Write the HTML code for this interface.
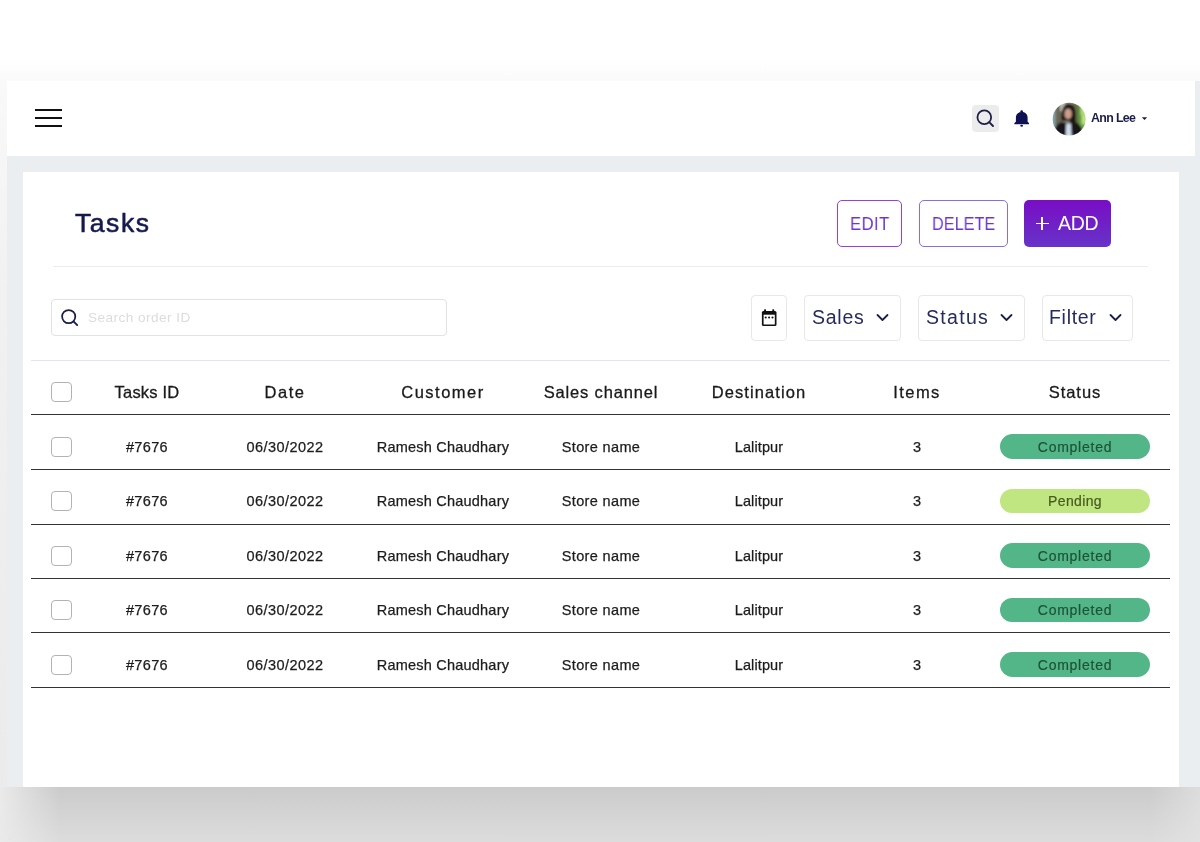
<!DOCTYPE html>
<html><head><meta charset="utf-8"><title>Tasks</title>
<style>
html,body{margin:0;padding:0;}
body{width:1200px;height:842px;overflow:hidden;position:relative;background:#fff;font-family:"Liberation Sans",sans-serif;}
.a{position:absolute;}
.t{position:absolute;white-space:nowrap;will-change:transform;}
</style></head><body>
<div class="a" style="left:0;top:58px;width:1200px;height:23px;background:linear-gradient(#ffffff,#fafafa);"></div>
<div class="a" style="left:0;top:787px;width:1200px;height:55px;background:linear-gradient(#cbcbcb,#dcdcdc);"></div>
<div class="a" style="left:0;top:787px;width:60px;height:55px;background:linear-gradient(90deg,rgba(234,234,234,1),rgba(234,234,234,0));"></div>
<div class="a" style="left:1150px;top:787px;width:50px;height:55px;background:linear-gradient(90deg,rgba(228,228,228,0),rgba(228,228,228,0.7));"></div>
<div class="a" style="left:0;top:81px;width:7px;height:706px;background:linear-gradient(#f9f9f9,#f1f1f1 30%,#ebebeb);"></div>
<div class="a" style="left:7px;top:81px;width:1193px;height:706px;background:#ebeef0;"></div>
<div class="a" style="left:7px;top:81px;width:1188px;height:75px;background:#fff;"></div>
<div class="a" style="left:35px;top:109px;width:27px;height:2px;background:#111;"></div>
<div class="a" style="left:35px;top:117px;width:27px;height:2px;background:#111;"></div>
<div class="a" style="left:35px;top:125px;width:27px;height:2px;background:#111;"></div>
<div class="a" style="left:972px;top:105px;width:27px;height:27px;background:#ececec;border-radius:4px;"></div>
<svg class="a" style="left:972px;top:105px" width="27" height="27" viewBox="0 0 27 27"><circle cx="12.3" cy="12.3" r="6.85" fill="none" stroke="#1c2048" stroke-width="1.8"/><line x1="17.2" y1="17.2" x2="21" y2="21" stroke="#1c2048" stroke-width="1.9" stroke-linecap="round"/></svg>
<svg class="a" style="left:1008px;top:104px" width="28" height="28" viewBox="0 0 28 28"><circle cx="13.65" cy="7.5" r="1.3" fill="#0e1252"/><path d="M7.9 17.7V13.6C7.9 9.9 10.3 7.9 13.65 7.9S19.6 9.9 19.6 13.6V17.7L21 18.9V20.3H6.4V18.9Z" fill="#0e1252"/><ellipse cx="13.65" cy="21.7" rx="1.4" ry="1.05" fill="#0e1252"/></svg>
<svg class="a" style="left:1049px;top:100px" width="40" height="40" viewBox="0 0 40 40"><defs><clipPath id="cc"><circle cx="20.1" cy="19.2" r="16.4"/></clipPath><filter id="bl" x="-20%" y="-20%" width="140%" height="140%"><feGaussianBlur stdDeviation="0.8"/></filter></defs>
<g clip-path="url(#cc)"><g filter="url(#bl)">
<rect width="40" height="40" fill="#8d8a76"/>
<rect x="0" y="0" width="7" height="40" fill="#88a1ab"/>
<rect x="6.5" y="0" width="6" height="40" fill="#6a6654"/>
<rect x="11" y="0" width="5" height="11" fill="#b9b8ae"/>
<rect x="24" y="3" width="5" height="22" fill="#6d6a4c"/>
<rect x="27" y="0" width="13" height="40" fill="#74a84a"/>
<rect x="27" y="4" width="3.5" height="20" fill="#5e7a3e"/>
<rect x="31.5" y="7" width="5" height="8" fill="#a9dc74"/>
<rect x="33" y="15" width="4" height="9" fill="#b8e67e"/>
<path d="M12.3 21C12.2 8.5 14.8 3.8 19.7 3.8S26.8 8 26.8 15L27.3 31L20.8 31L20.8 21Z" fill="#1b1716"/>
<ellipse cx="19.1" cy="13.8" rx="3.7" ry="5.3" fill="#cd9d8a"/>
<path d="M3 40C4.5 28.5 8 23.5 13 21.8L19.5 23.5L25 21.5C31 23 34 28 36 40Z" fill="#15161c"/>
<path d="M21 21L26.8 21L27.3 31L22 31Z" fill="#1a1717"/>
<path d="M17.2 23.6L22 23.6L23 40H16.6Z" fill="#cfdcec"/>
</g></g></svg>
<div class="t" style="left:1090.50px;top:110.70px;font-size:12.4px;line-height:15px;color:#1b1d4b;font-weight:bold;letter-spacing:-0.65px;">Ann Lee</div>
<svg class="a" style="left:1141px;top:116px" width="7" height="5" viewBox="0 0 7 5"><path d="M0.8 1.2h5.4L3.5 4z" fill="#1b1d4b"/></svg>
<div class="a" style="left:23px;top:172px;width:1155.5px;height:615px;background:#fff;"></div>
<div class="t" style="left:75.00px;top:207.37px;font-size:26.5px;line-height:32px;color:#151a4d;font-weight:normal;letter-spacing:1.55px;-webkit-text-stroke:0.55px #151a4d;">Tasks</div>
<div class="a" style="left:837px;top:200px;width:63px;height:45px;border:1px solid #9540d6;border-radius:5px;"></div>
<div class="t" style="left:850.30px;top:211.82px;font-size:19px;line-height:23px;color:#6b38cf;font-weight:normal;letter-spacing:0.5px;transform:scaleX(0.875);transform-origin:0 0;">EDIT</div>
<div class="a" style="left:919px;top:200px;width:87px;height:45px;border:1px solid #8a6cdc;border-radius:5px;"></div>
<div class="t" style="left:931.50px;top:211.82px;font-size:19px;line-height:23px;color:#6b38cf;font-weight:normal;letter-spacing:0px;transform:scaleX(0.855);transform-origin:0 0;">DELETE</div>
<div class="a" style="left:1024px;top:200px;width:87px;height:47px;border-radius:5px;background:linear-gradient(#790dc5,#6733c8);"></div>
<div class="a" style="left:1035.6px;top:222.5px;width:13.5px;height:1.8px;background:#fff;"></div>
<div class="a" style="left:1041.45px;top:216.6px;width:1.8px;height:13.6px;background:#fff;"></div>
<div class="t" style="left:1057.70px;top:211.84px;font-size:19.5px;line-height:23px;color:#ffffff;font-weight:normal;letter-spacing:-0.3px;">ADD</div>
<div class="a" style="left:53px;top:266px;width:1095px;height:1px;background:#ecebf3;"></div>
<div class="a" style="left:51px;top:299px;width:394px;height:35px;border:1px solid #e2e2e2;border-radius:4px;"></div>
<svg class="a" style="left:59.6px;top:307.6px" width="20" height="20" viewBox="0 0 20 20"><circle cx="8.7" cy="8.6" r="6.6" fill="none" stroke="#1a1f48" stroke-width="1.75"/><line x1="13.5" y1="13.4" x2="17.2" y2="17.1" stroke="#1a1f48" stroke-width="1.9" stroke-linecap="round"/></svg>
<div class="t" style="left:88.00px;top:309.99px;font-size:13.6px;line-height:16px;color:#dcdcdc;font-weight:normal;letter-spacing:0.45px;">Search order ID</div>
<div class="a" style="left:751px;top:295px;width:34px;height:44px;border:1px solid #e8e8e8;border-radius:4px;"></div>
<div class="a" style="left:804px;top:295px;width:95px;height:44px;border:1px solid #e8e8e8;border-radius:4px;"></div>
<div class="a" style="left:918px;top:295px;width:105px;height:44px;border:1px solid #e8e8e8;border-radius:4px;"></div>
<div class="a" style="left:1042px;top:295px;width:89px;height:44px;border:1px solid #e8e8e8;border-radius:4px;"></div>
<svg class="a" style="left:761px;top:309px" width="17" height="18" viewBox="0 0 17 18"><rect x="3.1" y="0.3" width="1.9" height="3" rx="0.6" fill="#111"/><rect x="11.3" y="0.3" width="1.9" height="3" rx="0.6" fill="#111"/><rect x="0.9" y="2.1" width="14.6" height="15" rx="1.5" fill="#111"/><rect x="2.6" y="5.7" width="11.2" height="9.8" fill="#fff"/><ellipse cx="4.7" cy="8.5" rx="1.05" ry="1" fill="#111"/><ellipse cx="8.1" cy="8.5" rx="1.05" ry="1" fill="#111"/><ellipse cx="11.5" cy="8.5" rx="1.05" ry="1" fill="#111"/></svg>
<div class="t" style="left:812.30px;top:305.74px;font-size:19.5px;line-height:23px;color:#262b5e;font-weight:normal;letter-spacing:0.75px;">Sales</div>
<svg class="a" style="left:876.1px;top:313px" width="13" height="9" viewBox="0 0 13 9"><path d="M1.5 2L6.5 7 11.5 2" fill="none" stroke="#1c1f4a" stroke-width="1.8" stroke-linecap="round" stroke-linejoin="round"/></svg>
<div class="t" style="left:925.90px;top:305.74px;font-size:19.5px;line-height:23px;color:#262b5e;font-weight:normal;letter-spacing:1.3px;">Status</div>
<svg class="a" style="left:1000.4px;top:313px" width="13" height="9" viewBox="0 0 13 9"><path d="M1.5 2L6.5 7 11.5 2" fill="none" stroke="#1c1f4a" stroke-width="1.8" stroke-linecap="round" stroke-linejoin="round"/></svg>
<div class="t" style="left:1049.40px;top:305.74px;font-size:19.5px;line-height:23px;color:#262b5e;font-weight:normal;letter-spacing:0.7px;">Filter</div>
<svg class="a" style="left:1108.6999999999998px;top:313px" width="13" height="9" viewBox="0 0 13 9"><path d="M1.5 2L6.5 7 11.5 2" fill="none" stroke="#1c1f4a" stroke-width="1.8" stroke-linecap="round" stroke-linejoin="round"/></svg>
<div class="a" style="left:31px;top:360px;width:1139px;height:1px;background:#e4e2f7;"></div>
<div class="a" style="left:51px;top:382px;width:19px;height:18px;border:1px solid #b3b3b3;border-radius:4px;"></div>
<div class="t" style="left:46.50px;top:382.48px;width:200px;text-align:center;font-size:16.5px;line-height:20px;color:#1a1a1a;font-weight:normal;letter-spacing:0.2px;-webkit-text-stroke:0.3px #1a1a1a;">Tasks ID</div>
<div class="t" style="left:185.47px;top:382.48px;width:200px;text-align:center;font-size:16.5px;line-height:20px;color:#1a1a1a;font-weight:normal;letter-spacing:1.55px;-webkit-text-stroke:0.3px #1a1a1a;">Date</div>
<div class="t" style="left:343.25px;top:382.48px;width:200px;text-align:center;font-size:16.5px;line-height:20px;color:#1a1a1a;font-weight:normal;letter-spacing:1.5px;-webkit-text-stroke:0.3px #1a1a1a;">Customer</div>
<div class="t" style="left:501.13px;top:382.48px;width:200px;text-align:center;font-size:16.5px;line-height:20px;color:#1a1a1a;font-weight:normal;letter-spacing:0.8500000000000001px;-webkit-text-stroke:0.3px #1a1a1a;">Sales channel</div>
<div class="t" style="left:659.35px;top:382.48px;width:200px;text-align:center;font-size:16.5px;line-height:20px;color:#1a1a1a;font-weight:normal;letter-spacing:1.1px;-webkit-text-stroke:0.3px #1a1a1a;">Destination</div>
<div class="t" style="left:817.33px;top:382.48px;width:200px;text-align:center;font-size:16.5px;line-height:20px;color:#1a1a1a;font-weight:normal;letter-spacing:1.45px;-webkit-text-stroke:0.3px #1a1a1a;">Items</div>
<div class="t" style="left:975.38px;top:382.48px;width:200px;text-align:center;font-size:16.5px;line-height:20px;color:#1a1a1a;font-weight:normal;letter-spacing:0.95px;-webkit-text-stroke:0.3px #1a1a1a;">Status</div>
<div class="a" style="left:31px;top:414px;width:1139px;height:1px;background:#333;box-shadow:0 0 0.6px rgba(0,0,0,0.5);"></div>
<div class="a" style="left:51px;top:437px;width:19px;height:18px;border:1px solid #b3b3b3;border-radius:4px;"></div>
<div class="t" style="left:36.58px;top:438.58px;width:220px;text-align:center;font-size:14.5px;line-height:17px;color:#1c1c1c;font-weight:normal;letter-spacing:0.35px;-webkit-text-stroke:0.25px #1c1c1c;">#7676</div>
<div class="t" style="left:174.92px;top:438.58px;width:220px;text-align:center;font-size:14.5px;line-height:17px;color:#1c1c1c;font-weight:normal;letter-spacing:0.45px;-webkit-text-stroke:0.25px #1c1c1c;">06/30/2022</div>
<div class="t" style="left:332.61px;top:438.58px;width:220px;text-align:center;font-size:14.5px;line-height:17px;color:#1c1c1c;font-weight:normal;letter-spacing:0.21000000000000002px;-webkit-text-stroke:0.25px #1c1c1c;">Ramesh Chaudhary</div>
<div class="t" style="left:490.88px;top:438.58px;width:220px;text-align:center;font-size:14.5px;line-height:17px;color:#1c1c1c;font-weight:normal;letter-spacing:0.35px;-webkit-text-stroke:0.25px #1c1c1c;">Store name</div>
<div class="t" style="left:648.86px;top:438.58px;width:220px;text-align:center;font-size:14.5px;line-height:17px;color:#1c1c1c;font-weight:normal;letter-spacing:0.12000000000000001px;-webkit-text-stroke:0.25px #1c1c1c;">Lalitpur</div>
<div class="t" style="left:806.62px;top:438.58px;width:220px;text-align:center;font-size:14.5px;line-height:17px;color:#1c1c1c;font-weight:normal;letter-spacing:0.05px;-webkit-text-stroke:0.25px #1c1c1c;">3</div>
<div class="a" style="left:1000px;top:434.20px;width:150px;height:24.5px;border-radius:12.5px;background:#52b689;"></div>
<div class="t" style="left:1000.38px;top:438.95px;width:150px;text-align:center;font-size:14px;line-height:17px;color:#1f5236;font-weight:normal;letter-spacing:0.75px;-webkit-text-stroke:0.2px #1f5236;">Completed</div>
<div class="a" style="left:31px;top:469px;width:1139px;height:1px;background:#333;box-shadow:0 0 0.6px rgba(0,0,0,0.5);"></div>
<div class="a" style="left:51px;top:491px;width:19px;height:18px;border:1px solid #b3b3b3;border-radius:4px;"></div>
<div class="t" style="left:36.58px;top:493.08px;width:220px;text-align:center;font-size:14.5px;line-height:17px;color:#1c1c1c;font-weight:normal;letter-spacing:0.35px;-webkit-text-stroke:0.25px #1c1c1c;">#7676</div>
<div class="t" style="left:174.92px;top:493.08px;width:220px;text-align:center;font-size:14.5px;line-height:17px;color:#1c1c1c;font-weight:normal;letter-spacing:0.45px;-webkit-text-stroke:0.25px #1c1c1c;">06/30/2022</div>
<div class="t" style="left:332.61px;top:493.08px;width:220px;text-align:center;font-size:14.5px;line-height:17px;color:#1c1c1c;font-weight:normal;letter-spacing:0.21000000000000002px;-webkit-text-stroke:0.25px #1c1c1c;">Ramesh Chaudhary</div>
<div class="t" style="left:490.88px;top:493.08px;width:220px;text-align:center;font-size:14.5px;line-height:17px;color:#1c1c1c;font-weight:normal;letter-spacing:0.35px;-webkit-text-stroke:0.25px #1c1c1c;">Store name</div>
<div class="t" style="left:648.86px;top:493.08px;width:220px;text-align:center;font-size:14.5px;line-height:17px;color:#1c1c1c;font-weight:normal;letter-spacing:0.12000000000000001px;-webkit-text-stroke:0.25px #1c1c1c;">Lalitpur</div>
<div class="t" style="left:806.62px;top:493.08px;width:220px;text-align:center;font-size:14.5px;line-height:17px;color:#1c1c1c;font-weight:normal;letter-spacing:0.05px;-webkit-text-stroke:0.25px #1c1c1c;">3</div>
<div class="a" style="left:1000px;top:488.70px;width:150px;height:24.5px;border-radius:12.5px;background:#bfe680;"></div>
<div class="t" style="left:1000.17px;top:493.45px;width:150px;text-align:center;font-size:14px;line-height:17px;color:#485a1e;font-weight:normal;letter-spacing:0.35px;-webkit-text-stroke:0.2px #485a1e;">Pending</div>
<div class="a" style="left:31px;top:524px;width:1139px;height:1px;background:#333;box-shadow:0 0 0.6px rgba(0,0,0,0.5);"></div>
<div class="a" style="left:51px;top:546px;width:19px;height:18px;border:1px solid #b3b3b3;border-radius:4px;"></div>
<div class="t" style="left:36.58px;top:547.58px;width:220px;text-align:center;font-size:14.5px;line-height:17px;color:#1c1c1c;font-weight:normal;letter-spacing:0.35px;-webkit-text-stroke:0.25px #1c1c1c;">#7676</div>
<div class="t" style="left:174.92px;top:547.58px;width:220px;text-align:center;font-size:14.5px;line-height:17px;color:#1c1c1c;font-weight:normal;letter-spacing:0.45px;-webkit-text-stroke:0.25px #1c1c1c;">06/30/2022</div>
<div class="t" style="left:332.61px;top:547.58px;width:220px;text-align:center;font-size:14.5px;line-height:17px;color:#1c1c1c;font-weight:normal;letter-spacing:0.21000000000000002px;-webkit-text-stroke:0.25px #1c1c1c;">Ramesh Chaudhary</div>
<div class="t" style="left:490.88px;top:547.58px;width:220px;text-align:center;font-size:14.5px;line-height:17px;color:#1c1c1c;font-weight:normal;letter-spacing:0.35px;-webkit-text-stroke:0.25px #1c1c1c;">Store name</div>
<div class="t" style="left:648.86px;top:547.58px;width:220px;text-align:center;font-size:14.5px;line-height:17px;color:#1c1c1c;font-weight:normal;letter-spacing:0.12000000000000001px;-webkit-text-stroke:0.25px #1c1c1c;">Lalitpur</div>
<div class="t" style="left:806.62px;top:547.58px;width:220px;text-align:center;font-size:14.5px;line-height:17px;color:#1c1c1c;font-weight:normal;letter-spacing:0.05px;-webkit-text-stroke:0.25px #1c1c1c;">3</div>
<div class="a" style="left:1000px;top:543.20px;width:150px;height:24.5px;border-radius:12.5px;background:#52b689;"></div>
<div class="t" style="left:1000.38px;top:547.95px;width:150px;text-align:center;font-size:14px;line-height:17px;color:#1f5236;font-weight:normal;letter-spacing:0.75px;-webkit-text-stroke:0.2px #1f5236;">Completed</div>
<div class="a" style="left:31px;top:578px;width:1139px;height:1px;background:#333;box-shadow:0 0 0.6px rgba(0,0,0,0.5);"></div>
<div class="a" style="left:51px;top:600px;width:19px;height:18px;border:1px solid #b3b3b3;border-radius:4px;"></div>
<div class="t" style="left:36.58px;top:602.08px;width:220px;text-align:center;font-size:14.5px;line-height:17px;color:#1c1c1c;font-weight:normal;letter-spacing:0.35px;-webkit-text-stroke:0.25px #1c1c1c;">#7676</div>
<div class="t" style="left:174.92px;top:602.08px;width:220px;text-align:center;font-size:14.5px;line-height:17px;color:#1c1c1c;font-weight:normal;letter-spacing:0.45px;-webkit-text-stroke:0.25px #1c1c1c;">06/30/2022</div>
<div class="t" style="left:332.61px;top:602.08px;width:220px;text-align:center;font-size:14.5px;line-height:17px;color:#1c1c1c;font-weight:normal;letter-spacing:0.21000000000000002px;-webkit-text-stroke:0.25px #1c1c1c;">Ramesh Chaudhary</div>
<div class="t" style="left:490.88px;top:602.08px;width:220px;text-align:center;font-size:14.5px;line-height:17px;color:#1c1c1c;font-weight:normal;letter-spacing:0.35px;-webkit-text-stroke:0.25px #1c1c1c;">Store name</div>
<div class="t" style="left:648.86px;top:602.08px;width:220px;text-align:center;font-size:14.5px;line-height:17px;color:#1c1c1c;font-weight:normal;letter-spacing:0.12000000000000001px;-webkit-text-stroke:0.25px #1c1c1c;">Lalitpur</div>
<div class="t" style="left:806.62px;top:602.08px;width:220px;text-align:center;font-size:14.5px;line-height:17px;color:#1c1c1c;font-weight:normal;letter-spacing:0.05px;-webkit-text-stroke:0.25px #1c1c1c;">3</div>
<div class="a" style="left:1000px;top:597.70px;width:150px;height:24.5px;border-radius:12.5px;background:#52b689;"></div>
<div class="t" style="left:1000.38px;top:602.45px;width:150px;text-align:center;font-size:14px;line-height:17px;color:#1f5236;font-weight:normal;letter-spacing:0.75px;-webkit-text-stroke:0.2px #1f5236;">Completed</div>
<div class="a" style="left:31px;top:632px;width:1139px;height:1px;background:#333;box-shadow:0 0 0.6px rgba(0,0,0,0.5);"></div>
<div class="a" style="left:51px;top:655px;width:19px;height:18px;border:1px solid #b3b3b3;border-radius:4px;"></div>
<div class="t" style="left:36.58px;top:656.58px;width:220px;text-align:center;font-size:14.5px;line-height:17px;color:#1c1c1c;font-weight:normal;letter-spacing:0.35px;-webkit-text-stroke:0.25px #1c1c1c;">#7676</div>
<div class="t" style="left:174.92px;top:656.58px;width:220px;text-align:center;font-size:14.5px;line-height:17px;color:#1c1c1c;font-weight:normal;letter-spacing:0.45px;-webkit-text-stroke:0.25px #1c1c1c;">06/30/2022</div>
<div class="t" style="left:332.61px;top:656.58px;width:220px;text-align:center;font-size:14.5px;line-height:17px;color:#1c1c1c;font-weight:normal;letter-spacing:0.21000000000000002px;-webkit-text-stroke:0.25px #1c1c1c;">Ramesh Chaudhary</div>
<div class="t" style="left:490.88px;top:656.58px;width:220px;text-align:center;font-size:14.5px;line-height:17px;color:#1c1c1c;font-weight:normal;letter-spacing:0.35px;-webkit-text-stroke:0.25px #1c1c1c;">Store name</div>
<div class="t" style="left:648.86px;top:656.58px;width:220px;text-align:center;font-size:14.5px;line-height:17px;color:#1c1c1c;font-weight:normal;letter-spacing:0.12000000000000001px;-webkit-text-stroke:0.25px #1c1c1c;">Lalitpur</div>
<div class="t" style="left:806.62px;top:656.58px;width:220px;text-align:center;font-size:14.5px;line-height:17px;color:#1c1c1c;font-weight:normal;letter-spacing:0.05px;-webkit-text-stroke:0.25px #1c1c1c;">3</div>
<div class="a" style="left:1000px;top:652.20px;width:150px;height:24.5px;border-radius:12.5px;background:#52b689;"></div>
<div class="t" style="left:1000.38px;top:656.95px;width:150px;text-align:center;font-size:14px;line-height:17px;color:#1f5236;font-weight:normal;letter-spacing:0.75px;-webkit-text-stroke:0.2px #1f5236;">Completed</div>
<div class="a" style="left:31px;top:687px;width:1139px;height:1px;background:#333;box-shadow:0 0 0.6px rgba(0,0,0,0.5);"></div>
</body></html>
